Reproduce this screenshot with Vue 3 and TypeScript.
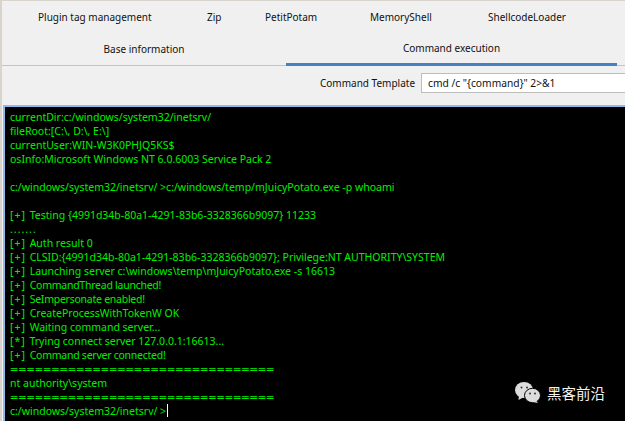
<script setup lang="ts">
interface LogLine {
  tag: string
  text: string
  kind: string
}

const topTabs: string[] = ['Plugin tag management', 'Zip', 'PetitPotam', 'MemoryShell', 'ShellcodeLoader']
const raw: string[] = [
  'currentDir:c:/windows/system32/inetsrv/',
  'fileRoot:[C:\\, D:\\, E:\\]',
  'currentUser:WIN-W3K0PHJQ5KS$',
  'osInfo:Microsoft Windows NT 6.0.6003 Service Pack 2',
  '',
  'c:/windows/system32/inetsrv/ >c:/windows/temp/mJuicyPotato.exe -p whoami',
  '',
  '[+] Testing {4991d34b-80a1-4291-83b6-3328366b9097} 11233',
  '.......',
  '[+] Auth result 0',
  '[+] CLSID:{4991d34b-80a1-4291-83b6-3328366b9097}; Privilege:NT AUTHORITY\\SYSTEM',
  '[+] Launching server c:\\windows\\temp\\mJuicyPotato.exe -s 16613',
  '[+] CommandThread launched!',
  '[+] SeImpersonate enabled!',
  '[+] CreateProcessWithTokenW OK',
  '[+] Waiting command server...',
  '[*] Trying connect server 127.0.0.1:16613...',
  '[+] Command server connected!',
  '================================',
  'nt authority\\system',
  '================================',
]
const lines: LogLine[] = raw.map((l) => {
  const tagged = l.startsWith('[+] ') || l.startsWith('[*] ')
  let kind = ''
  if (l.startsWith('==')) kind = 'rule'
  else if (l.startsWith('...')) kind = 'dots'
  else if (/launched|enabled|connected/.test(l)) kind = 'tight'
  return { tag: tagged ? l.slice(0, 4) : '', text: tagged ? l.slice(4) : l, kind }
})
</script>

<template>
  <div class="window">
    <div class="tabs top">
      <div v-for="t in topTabs" :key="t" class="tab">{{ t }}</div>
    </div>
    <div class="tabs bottom">
      <div class="tab base">Base information</div>
      <div class="tab active">Command execution</div>
    </div>
    <div class="form">
      <label class="label">Command Template</label>
      <div class="input">cmd /c "{command}" 2&gt;&amp;1</div>
    </div>
    <div class="terminal">
      <div v-for="(l, i) in lines" :key="i" class="line" :class="l.kind"><span class="tag">{{ l.tag }}</span>{{ l.text }}</div>
      <div class="line">c:/windows/system32/inetsrv/ &gt;<span class="caret"></span></div>
      <div class="mark">
        <svg width="26" height="21" viewBox="0 0 26 21">
          <ellipse cx="9" cy="8" rx="9" ry="8" fill="#dcdcdc" />
          <path d="M4 13 L3.5 18 L9 15 Z" fill="#dcdcdc" />
          <ellipse cx="17.5" cy="13.5" rx="8" ry="7.2" stroke="#000" stroke-width="1" fill="#dcdcdc" />
          <path d="M21 18.5 L23 21 L17.5 20 Z" fill="#dcdcdc" />
          <circle cx="6.5" cy="5.5" r="1" fill="#333" />
          <circle cx="12" cy="5.5" r="1" fill="#333" />
          <circle cx="15" cy="11.5" r="1" fill="#333" />
          <circle cx="20" cy="11.5" r="1" fill="#333" />
        </svg>
        <span class="mark-text">黑客前沿</span>
      </div>
    </div>
  </div>
</template>

<style scoped>
.window {
  width: 625px;
  height: 421px;
  box-sizing: border-box;
  border-top: 1px solid #d8d4cd;
  border-left: 2px solid #d8d4cd;
  background: #f0f0f0;
  font-family: "Noto Sans", "Open Sans", sans-serif;
  font-size: 10px;
  color: #111;
  display: flex;
  flex-direction: column;
  overflow: hidden;
}
.tabs {
  display: flex;
  height: 32px;
  flex-shrink: 0;
  align-items: center;
}
.top {
  padding-left: 36px;
}
.top .tab:nth-child(1) { width: 169px; }
.top .tab:nth-child(2) { width: 58px; }
.top .tab:nth-child(3) { width: 105px; }
.top .tab:nth-child(4) { width: 118px; }
.top .tab:nth-child(5) { width: 100px; }
.tab {
  white-space: nowrap;
}
.bottom {
  border-bottom: 1px solid #c4c4c4;
  box-sizing: border-box;
  height: 33px;
  align-items: stretch;
  padding-right: 8px;
}
.base {
  width: 284px;
  flex-shrink: 0;
  display: flex;
  align-items: center;
  justify-content: center;
  box-sizing: border-box;
}
.active {
  flex: 1;
  display: flex;
  align-items: center;
  justify-content: center;
  border-bottom: 3px solid #4480c4;
  margin-bottom: -1px;
}
.form {
  height: 39px;
  flex-shrink: 0;
  display: flex;
  align-items: center;
  padding-left: 318px;
  padding-bottom: 5px;
  box-sizing: border-box;
}
.label {
  width: 101px;
  flex-shrink: 0;
}
.input {
  flex: 1;
  height: 20px;
  box-sizing: border-box;
  border: 1px solid #bdbdbd;
  border-right: none;
  background: #fff;
  padding-left: 6px;
  line-height: 18px;
  font-size: 10.25px;
}
.terminal {
  position: relative;
  flex: 1;
  margin-left: 1px;
  background: #000;
  border: 2px solid #8fb9e8;
  border-right: none;
  border-bottom: none;
  padding: 3px 0 0 5px;
  color: #00f000;
  font-size: 10.5px;
  overflow: hidden;
}
.line {
  height: 14px;
  line-height: 14px;
  white-space: pre;
}
.tag {
  letter-spacing: 1px;
}
.rule {
  transform: scaleX(1.375);
  transform-origin: left center;
}
.dots {
  letter-spacing: 1px;
}
.tight {
  letter-spacing: -0.25px;
}
.caret {
  display: inline-block;
  width: 1px;
  height: 13px;
  background: #fff;
  vertical-align: -2px;
  margin-left: 1px;
}
.mark {
  position: absolute;
  right: 20px;
  bottom: 18px;
  display: flex;
  align-items: center;
  gap: 6px;
}
.mark-text {
  color: #f2f2f2;
  font-family: "Noto Sans CJK SC", sans-serif;
  font-size: 14.5px;
  line-height: 20px;
}
</style>
